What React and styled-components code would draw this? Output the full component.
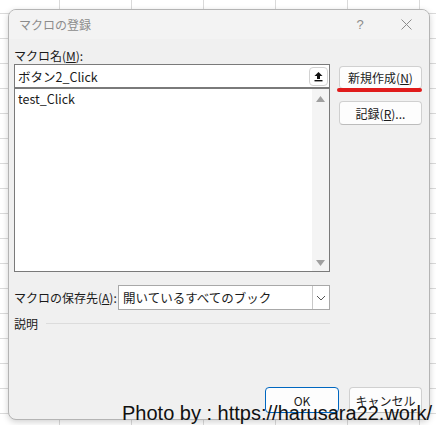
import React from 'react';
import styled, { createGlobalStyle } from 'styled-components';

const GlobalStyle = createGlobalStyle`
  html, body {
    margin: 0;
    padding: 0;
  }
  body {
    font-family: "Noto Sans CJK JP", "Noto Sans", sans-serif;
    font-size: 12px;
    color: #1a1a1a;
  }
`;

const Sheet = styled.div`
  position: relative;
  width: 436px;
  height: 425px;
  box-sizing: border-box;
  padding: 9px 6px 0 8px;
  overflow: hidden;
  background-color: #ffffff;
  background-image:
    linear-gradient(to right, #dadada 1px, transparent 1px),
    linear-gradient(to bottom, #dadada 1px, transparent 1px);
  background-size: 72px 25px;
  background-position: 59px 13px;
`;

const Dialog = styled.div`
  width: 422px;
  height: 411px;
  box-sizing: border-box;
  display: flex;
  flex-direction: column;
  background: #f0f0f0;
  border: 1px solid #b4b4b4;
  border-radius: 8px;
  overflow: hidden;
  box-shadow: 0 2px 6px rgba(0, 0, 0, 0.18);
`;

const TitleBar = styled.div`
  height: 29px;
  flex: 0 0 29px;
  display: flex;
  align-items: center;
  padding-left: 10px;
  background: #f3f3f3;
`;

const Title = styled.span`
  flex: 1;
  color: #8c8c8c;
  font-size: 12px;
`;

const TitleButton = styled.span`
  width: 46px;
  display: flex;
  justify-content: center;
  color: #8c8c8c;
  font-family: "Liberation Sans", sans-serif;
  font-size: 13px;
`;

const Body = styled.div`
  flex: 1;
  display: flex;
  flex-direction: column;
  padding: 8px 7px 6px 5px;
`;

const TopRow = styled.div`
  display: flex;
  align-items: flex-start;
`;

const LeftCol = styled.div`
  width: 316px;
  display: flex;
  flex-direction: column;
`;

const Label = styled.div`
  height: 17px;
  line-height: 17px;
  white-space: nowrap;
`;

const NameInput = styled.div`
  position: relative;
  height: 23px;
  box-sizing: border-box;
  display: flex;
  align-items: center;
  padding-left: 3px;
  background: #fff;
  border: 1px solid #7a7a7a;
  border-bottom: none;
  font-size: 12.5px;
`;

const UploadButton = styled.span`
  position: absolute;
  right: 1px;
  top: 2px;
  width: 19px;
  height: 19px;
  box-sizing: border-box;
  display: flex;
  align-items: center;
  justify-content: center;
  background: #fff;
  border: 1px solid #d2d2d2;
  border-radius: 4px;
`;

const ListBox = styled.div`
  height: 185px;
  box-sizing: border-box;
  display: flex;
  background: #fff;
  border: 1px solid #7a7a7a;
  border-top: 2px solid #7a7a7a;
`;

const ListItems = styled.div`
  flex: 1;
  padding: 2px 3px;
  font-size: 12.5px;
  line-height: 16px;
`;

const ScrollTrack = styled.div`
  width: 17px;
  display: flex;
  flex-direction: column;
  justify-content: space-between;
  align-items: center;
  padding: 7px 0 5px;
  background: #f4f4f4;
`;

const RightCol = styled.div`
  margin: 19px 0 0 9px;
  width: 83px;
  display: flex;
  flex-direction: column;
  gap: 12px;
`;

const Button = styled.button`
  position: relative;
  width: ${(p) => p.$w || 83}px;
  height: ${(p) => p.$h || 23}px;
  padding: 0;
  background: #fdfdfd;
  border: 1px solid ${(p) => (p.$primary ? '#0067c0' : '#d0d0d0')};
  border-bottom-color: ${(p) => (p.$primary ? '#0067c0' : '#bcbcbc')};
  border-radius: 4px;
  font-family: "Noto Sans CJK JP", sans-serif;
  font-size: 12px;
  color: #1a1a1a;
`;

const RedMark = styled.span`
  position: absolute;
  left: -3px;
  right: -1px;
  bottom: -4px;
  height: 4px;
  border-radius: 2px;
  background: #e01b1b;
`;

const SaveRow = styled.div`
  margin-top: 13px;
  display: flex;
  align-items: center;
`;

const SaveLabel = styled.span`
  width: 104px;
  white-space: nowrap;
`;

const Select = styled.div`
  width: 212px;
  height: 25px;
  box-sizing: border-box;
  display: flex;
  align-items: center;
  background: #fff;
  border: 1px solid #a8a8a8;
`;

const SelectText = styled.span`
  flex: 1;
  padding-left: 4px;
  font-size: 12.5px;
`;

const Chevron = styled.span`
  width: 17px;
  height: 23px;
  box-sizing: border-box;
  display: flex;
  align-items: center;
  justify-content: center;
  border-left: 1px solid #c8c8c8;
`;

const DescRow = styled.div`
  margin-top: 5px;
  width: 316px;
  display: flex;
  align-items: center;
  gap: 8px;
  &::after {
    content: '';
    flex: 1;
    height: 1px;
    background: #dcdcdc;
  }
`;

const Footer = styled.div`
  margin-top: auto;
  display: flex;
  justify-content: flex-end;
  gap: 10px;
`;

const Caption = styled.div`
  position: absolute;
  left: 122px;
  top: 403px;
  font-family: "Liberation Sans", Arial, sans-serif;
  font-size: 20px;
  line-height: 20px;
  color: #111;
  white-space: nowrap;
`;

const UpIcon = () => (
  <svg width="11" height="11" viewBox="0 0 11 11">
    <path d="M5.5 1 L9.5 5 H7 V8 H4 V5 H1.5 Z" fill="#111" />
    <rect x="1.5" y="9" width="8" height="1.4" fill="#111" />
  </svg>
);

const CloseIcon = () => (
  <svg width="11" height="11" viewBox="0 0 11 11">
    <path d="M0.5 0.5 L10.5 10.5 M10.5 0.5 L0.5 10.5" stroke="#8c8c8c" strokeWidth="1" fill="none" />
  </svg>
);

const Arrow = ({ down }) => (
  <svg width="9" height="6" viewBox="0 0 9 6">
    <path d={down ? 'M0 0 H9 L4.5 6 Z' : 'M0 6 H9 L4.5 0 Z'} fill="#a0a0a0" />
  </svg>
);

const ChevronIcon = () => (
  <svg width="10" height="6" viewBox="0 0 10 6">
    <polyline points="1,1 5,5 9,1" fill="none" stroke="#555" strokeWidth="1" />
  </svg>
);

export default function App() {
  return (
    <>
      <GlobalStyle />
      <Sheet>
        <Dialog>
          <TitleBar>
            <Title>マクロの登録</Title>
            <TitleButton>?</TitleButton>
            <TitleButton>
              <CloseIcon />
            </TitleButton>
          </TitleBar>
          <Body>
            <TopRow>
              <LeftCol>
                <Label>
                  マクロ名(<u>M</u>):
                </Label>
                <NameInput>
                  ボタン2_Click
                  <UploadButton>
                    <UpIcon />
                  </UploadButton>
                </NameInput>
                <ListBox>
                  <ListItems>test_Click</ListItems>
                  <ScrollTrack>
                    <Arrow />
                    <Arrow down />
                  </ScrollTrack>
                </ListBox>
              </LeftCol>
              <RightCol>
                <Button>
                  新規作成(<u>N</u>)
                  <RedMark />
                </Button>
                <Button $h={24}>
                  記録(<u>R</u>)...
                </Button>
              </RightCol>
            </TopRow>
            <SaveRow>
              <SaveLabel>
                マクロの保存先(<u>A</u>):
              </SaveLabel>
              <Select>
                <SelectText>開いているすべてのブック</SelectText>
                <Chevron>
                  <ChevronIcon />
                </Chevron>
              </Select>
            </SaveRow>
            <DescRow>説明</DescRow>
            <Footer>
              <Button $primary $w={74} $h={26}>
                OK
              </Button>
              <Button $w={73} $h={26}>
                キャンセル
              </Button>
            </Footer>
          </Body>
        </Dialog>
        <Caption>Photo by : https://harusara22.work/</Caption>
      </Sheet>
    </>
  );
}
